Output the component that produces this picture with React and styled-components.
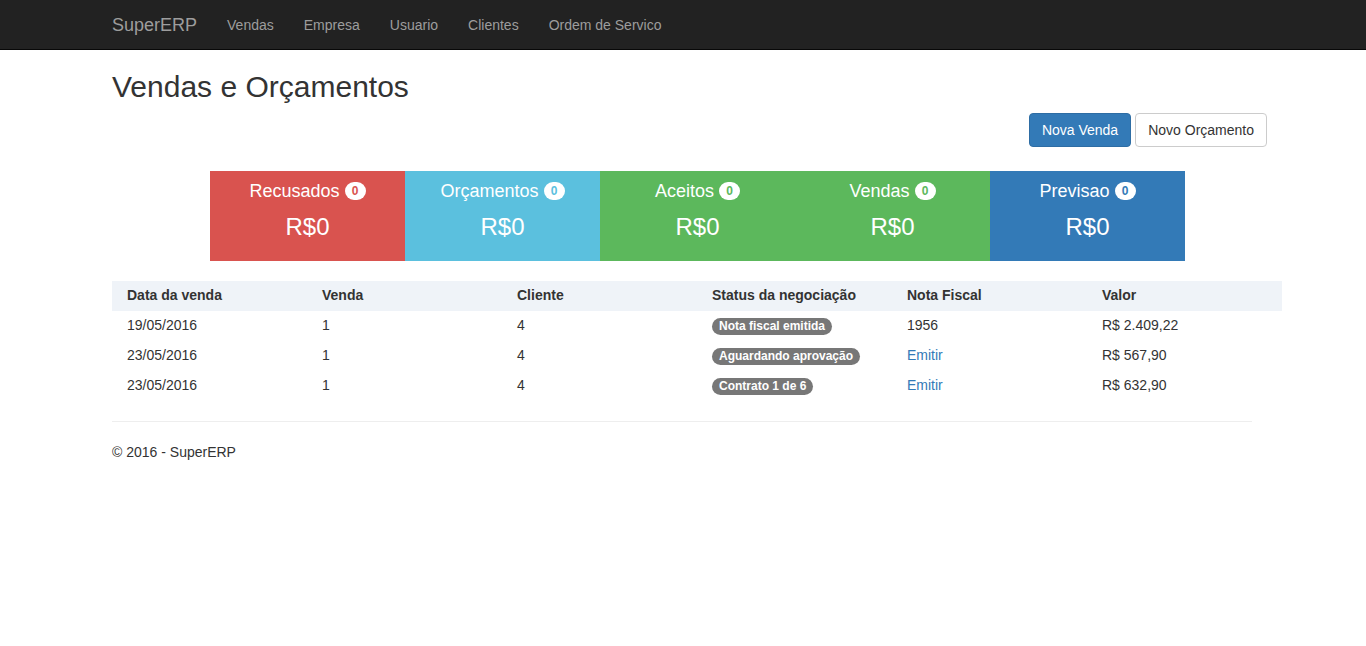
import React from "react";
import styled, { createGlobalStyle } from "styled-components";

const GlobalStyle = createGlobalStyle`
  body {
    margin: 0;
    font-family: "Liberation Sans", Arial, sans-serif;
    font-size: 14px;
    line-height: 1.42857;
    color: #333;
    background: #fff;
  }
`;

const Navbar = styled.nav`
  height: 50px;
  background: #222;
  border-bottom: 1px solid #080808;
  box-sizing: border-box;
`;

const NavInner = styled.div`
  width: 1140px;
  margin-left: calc(50% - 571px);
  display: flex;
  align-items: center;
  height: 50px;
`;

const Brand = styled.a`
  font-size: 18px;
  line-height: 20px;
  color: #9d9d9d;
  padding: 0 15px 0 0;
  text-decoration: none;
`;

const NavLink = styled.a`
  color: #9d9d9d;
  line-height: 20px;
  padding: 0 15px;
  text-decoration: none;
`;

const Container = styled.div`
  width: 1140px;
  margin-left: calc(50% - 571px);
`;

const Title = styled.h2`
  font-size: 30px;
  font-weight: 500;
  line-height: 33px;
  margin: 20px 0 10px;
`;

const Actions = styled.div`
  display: flex;
  justify-content: flex-end;
  gap: 4px;
  margin-right: -15px;
`;

const Button = styled.button`
  font-family: inherit;
  font-size: 14px;
  line-height: 20px;
  height: 34px;
  padding: 6px 12px;
  border-radius: 4px;
  border: 1px solid ${(p) => (p.primary ? "#2e6da4" : "#ccc")};
  background: ${(p) => (p.primary ? "#337ab7" : "#fff")};
  color: ${(p) => (p.primary ? "#fff" : "#333")};
  cursor: pointer;
`;

const Cards = styled.div`
  display: flex;
  margin: 24px 0 20px 98px;
`;

const Card = styled.div`
  width: 195px;
  height: 90px;
  box-sizing: border-box;
  padding-top: 10px;
  background: ${(p) => p.color};
  color: #fff;
  text-align: center;
`;

const CardTitle = styled.div`
  font-size: 18px;
  line-height: 20px;
`;

const Badge = styled.span`
  display: inline-block;
  min-width: 7px;
  padding: 3px 7px;
  font-size: 12px;
  font-weight: bold;
  line-height: 1;
  border-radius: 10px;
  background: #fff;
  color: ${(p) => p.color};
  vertical-align: middle;
  position: relative;
  top: -1px;
`;

const CardValue = styled.div`
  font-size: 24px;
  line-height: 28px;
  margin-top: 12px;
`;

const Table = styled.table`
  width: 1170px;
  table-layout: fixed;
  border-collapse: collapse;
  margin-bottom: 20px;
`;

const Th = styled.th`
  text-align: left;
  padding: 4px 15px 6px;
  line-height: 20px;
  background: #eff3f8;
  font-weight: bold;
`;

const Td = styled.td`
  padding: 4px 15px 6px;
  line-height: 20px;
  height: 20px;
`;

const Label = styled.span`
  display: inline-block;
  background: #777;
  color: #fff;
  font-size: 12px;
  font-weight: bold;
  line-height: 1;
  padding: 2px 7px 3px;
  border-radius: 10px;
  vertical-align: baseline;
`;

const Link = styled.a`
  color: #337ab7;
  text-decoration: none;
`;

const Hr = styled.hr`
  border: 0;
  border-top: 1px solid #eee;
  margin: 0 0 20px;
`;

const Footer = styled.footer`
  line-height: 20px;
`;

const cards = [
  { title: "Recusados", color: "#d9534f" },
  { title: "Orçamentos", color: "#5bc0de" },
  { title: "Aceitos", color: "#5cb85c" },
  { title: "Vendas", color: "#5cb85c" },
  { title: "Previsao", color: "#337ab7" },
];

const rows = [
  { data: "19/05/2016", status: "Nota fiscal emitida", nota: "1956", valor: "R$ 2.409,22" },
  { data: "23/05/2016", status: "Aguardando aprovação", nota: null, valor: "R$ 567,90" },
  { data: "23/05/2016", status: "Contrato 1 de 6", nota: null, valor: "R$ 632,90" },
];

const App = () => {
  return (
    <>
      <GlobalStyle />
      <Navbar>
        <NavInner>
          <Brand href="#">SuperERP</Brand>
          <NavLink href="#">Vendas</NavLink>
          <NavLink href="#">Empresa</NavLink>
          <NavLink href="#">Usuario</NavLink>
          <NavLink href="#">Clientes</NavLink>
          <NavLink href="#">Ordem de Servico</NavLink>
        </NavInner>
      </Navbar>
      <Container>
        <Title>Vendas e Orçamentos</Title>
        <Actions>
          <Button primary>Nova Venda</Button>
          <Button>Novo Orçamento</Button>
        </Actions>
        <Cards>
          {cards.map((c) => (
            <Card key={c.title} color={c.color}>
              <CardTitle>
                {c.title} <Badge color={c.color}>0</Badge>
              </CardTitle>
              <CardValue>R$0</CardValue>
            </Card>
          ))}
        </Cards>
        <Table>
          <thead>
            <tr>
              <Th>Data da venda</Th>
              <Th>Venda</Th>
              <Th>Cliente</Th>
              <Th>Status da negociação</Th>
              <Th>Nota Fiscal</Th>
              <Th>Valor</Th>
            </tr>
          </thead>
          <tbody>
            {rows.map((r, i) => (
              <tr key={i}>
                <Td>{r.data}</Td>
                <Td>1</Td>
                <Td>4</Td>
                <Td>
                  <Label>{r.status}</Label>
                </Td>
                <Td>{r.nota ? r.nota : <Link href="#">Emitir</Link>}</Td>
                <Td>{r.valor}</Td>
              </tr>
            ))}
          </tbody>
        </Table>
        <Hr />
        <Footer>© 2016 - SuperERP</Footer>
      </Container>
    </>
  );
};

export default App;
